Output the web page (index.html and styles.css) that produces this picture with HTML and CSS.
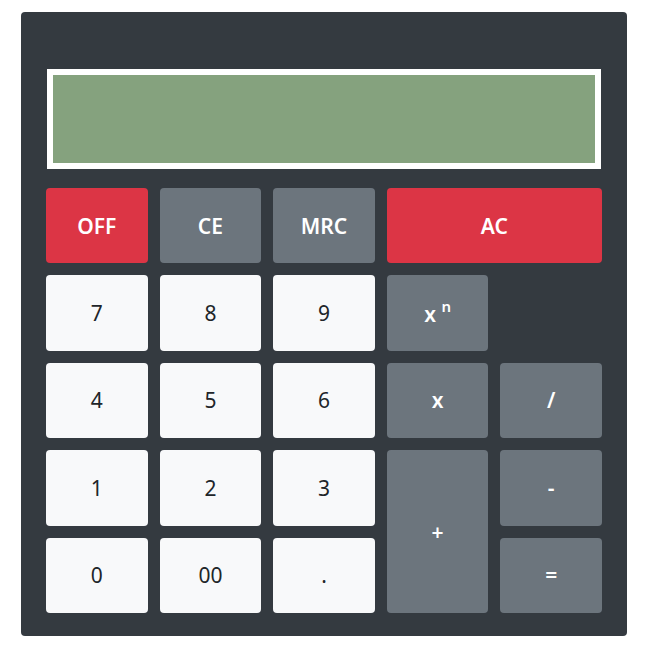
FILE: index.html
```html
<!DOCTYPE html>
<html>
<head>
<meta charset="utf-8">
<link rel="stylesheet" href="styles.css">
</head>
<body>
<div class="calc">
  <div class="display"></div>
  <div class="keys">
    <button class="key red bold">OFF</button>
    <button class="key gray bold">CE</button>
    <button class="key gray bold">MRC</button>
    <button class="key red bold ac">AC</button>
    <button class="key light">7</button>
    <button class="key light">8</button>
    <button class="key light">9</button>
    <button class="key gray bold pow">x <sup>n</sup></button>
    <button class="key light r3c1">4</button>
    <button class="key light">5</button>
    <button class="key light">6</button>
    <button class="key gray bold">x</button>
    <button class="key gray bold">/</button>
    <button class="key light">1</button>
    <button class="key light">2</button>
    <button class="key light">3</button>
    <button class="key gray bold plus">+</button>
    <button class="key gray bold">-</button>
    <button class="key light">0</button>
    <button class="key light">00</button>
    <button class="key light">.</button>
    <button class="key gray bold">=</button>
  </div>
</div>
</body>
</html>
```
FILE: styles.css
```css
html, body { margin: 0; padding: 0; background: #fff; }
body { font-family: "Noto Sans", "Open Sans", sans-serif; }
.calc {
  box-sizing: border-box;
  margin: 12px 0 0 21px;
  width: 606px;
  height: 624px;
  background: #343a40;
  border-radius: 4px;
  padding: 57px 25px 23px 25px;
}
.display {
  box-sizing: border-box;
  margin-left: 1px;
  width: 554px;
  height: 100px;
  border: 6px solid #fff;
  background: #85a27e;
}
.keys {
  margin-top: 19px;
  display: grid;
  grid-template-columns: repeat(5, 1fr);
  grid-template-rows: repeat(5, 1fr);
  gap: 12px;
  height: 425px;
}
.key {
  border: none;
  border-radius: 4px;
  font-family: inherit;
  font-size: 21px;
  padding: 0;
  margin: 0;
  cursor: pointer;
}
.bold { font-weight: 600; }
.red { background: #dc3545; color: #fff; }
.gray { background: #6c757d; color: #fff; }
.light { background: #f8f9fa; color: #212529; }
.ac { grid-column: 4 / 6; }
.pow { grid-column: 4; }
.r3c1 { grid-column: 1; }
.plus { grid-column: 4; grid-row: 4 / 6; }
.pow sup { font-size: 15px; position: relative; top: -2px; }
```
